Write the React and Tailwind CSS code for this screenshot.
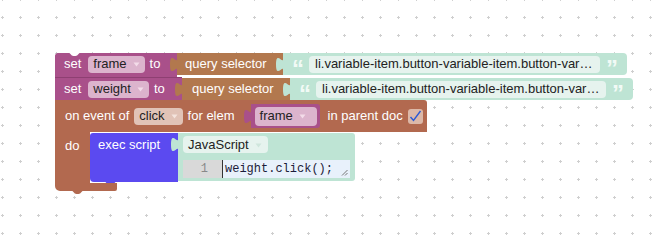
import React from 'react';

const Grid = () => (
  <svg className="absolute inset-0" width="665" height="245">
    <defs>
      <pattern id="dots" x="0" y="1" width="18" height="18" patternUnits="userSpaceOnUse">
        <rect x="1" y="16" width="3" height="1" fill="#cfcfcf" />
        <rect x="2" y="15" width="1" height="3" fill="#cfcfcf" />
      </pattern>
    </defs>
    <rect width="665" height="245" fill="url(#dots)" />
  </svg>
);

// puzzle tab on the left of a value block
const OutTab = ({ color, top = 4 }) => (
  <svg className="absolute" style={{ left: -7, top }} width="8" height="15" viewBox="0 0 8 15">
    <path d="M8,0 c0,10 -8,-8 -8,7.5 s8,-2.5 8,7.5 Z" fill={color} />
  </svg>
);

// notch tab under a statement block
const NextTab = ({ color, left, bottom = -4 }) => (
  <svg className="absolute" style={{ left, bottom }} width="15" height="5" viewBox="0 0 15 5">
    <path d="M0,0 C3,0 4,4 6.5,4 L8.5,4 C11,4 12,0 15,0 Z" fill={color} />
  </svg>
);

const Arrow = ({ color }) => (
  <svg width="7" height="5" viewBox="0 0 7 5" className="ml-[6px] mt-[1px] shrink-0">
    <path d="M0.5,0.5 L6.5,0.5 L3.5,4.5 Z" fill={color} />
  </svg>
);

const Dropdown = ({ label, bg, arrow, className = '' }) => (
  <div className={`flex shrink-0 items-center h-[17px] rounded-[4px] pl-[5px] pr-[5px] text-[#222] ${bg} ${className}`}>
    <span>{label}</span>
    <Arrow color={arrow} />
  </div>
);

const StringBlock = ({ text, className = '' }) => (
  <div className={`relative flex shrink-0 items-center h-[22px] bg-[#bee4d4] rounded-r-[4px] pl-[9px] pr-[9px] ${className}`}>
    <OutTab color="#bee4d4" />
    <span className="text-[24px] font-bold text-[#f2faf6] leading-none mt-[9px] mr-[5px]">“</span>
    <div className="h-[17px] flex-1 flex items-center bg-[#e6f3ee] rounded-[4px] px-[6px] text-[#222] overflow-hidden">{text}</div>
    <span className="text-[24px] font-bold text-[#f2faf6] leading-none mt-[9px] ml-[6px]">”</span>
  </div>
);

const SetRow = ({ name, setW, qW, qPl, strText, strW, h }) => (
  <div className={`flex ${h}`}>
    <div className={`relative flex shrink-0 items-center h-[22px] pl-[9px] bg-[#a9508a] text-white ${setW}`}>
      <span>set</span>
      <Dropdown label={name} bg="bg-[#dcb4cd]" arrow="#f3dce9" className="ml-[7px]" />
      <span className="ml-[5px]">to</span>
    </div>
    <div className={`relative flex shrink-0 items-center h-[22px] bg-[#b2784e] text-white ${qPl} ${qW}`}>
      <OutTab color="#b2784e" />
      query selector
    </div>
    <StringBlock text={strText} className={strW} />
  </div>
);

export default function App() {
  const longSel = 'li.variable-item.button-variable-item.button-var…';
  return (
    <div className="relative w-[665px] h-[245px] bg-white overflow-hidden whitespace-nowrap text-[13px] font-['Liberation_Sans',Arial,sans-serif]">
      <Grid />

      {/* block stack on the workspace */}
      <div className="absolute left-[55px] top-[53px] flex flex-col">
        <div className="relative bg-[#a9508a] w-[122px] h-[24px] rounded-tl-[4px]">
          <div className="absolute inset-0 w-max">
            <SetRow name="frame" h="h-[24px]" setW="w-[122px] rounded-tl-[4px]" qW="w-[106px]" qPl="pl-[8px]" strText={longSel} strW="w-[344px]" />
          </div>
          <svg className="absolute left-[12px] -top-[1px]" width="15" height="5" viewBox="0 0 15 5">
            <path d="M0,0 C3,0 4,4 6.5,4 L8.5,4 C11,4 12,0 15,0 Z" fill="#fff" />
          </svg>
        </div>
        <div className="relative bg-[#a9508a] w-[127px] h-[23px] border-t border-[#8e3f72]">
          <div className="absolute left-0 top-0 w-max">
            <SetRow name="weight" h="h-[22px]" setW="w-[127px]" qW="w-[108px]" qPl="pl-[10px]" strText={longSel} strW="w-[343px]" />
          </div>
          <NextTab color="#a9508a" left={12} bottom={-4} />
        </div>

        {/* on event block */}
        <div className="relative flex flex-col w-[372px]">
          <div className="flex items-center h-[32px] bg-[#b2694f] rounded-tr-[3px] text-white pl-[10px]">
            <span>on event of</span>
            <Dropdown label="click" bg="bg-[#e1c3b7]" arrow="#f4e4dd" className="ml-[5px]" />
            <span className="ml-[5px]">for elem</span>
            <div className="relative flex shrink-0 items-center h-[24px] w-[69px] ml-[16px] bg-[#a9508a] rounded-r-[3px] pl-[4px]">
              <OutTab color="#a9508a" top={5} />
              <Dropdown label="frame" bg="bg-[#dcb4cd]" arrow="#f3dce9" className="h-[19px] w-[62px]" />
            </div>
            <span className="ml-[8px]">in parent doc</span>
            <div className="ml-[5px] shrink-0 w-[15px] h-[15px] rounded-[3px] bg-[#dcb8a8] flex items-center justify-center">
              <svg width="13" height="12" viewBox="0 0 13 12">
                <path d="M1.5,7 L4.5,10.5 L11.5,1" stroke="#2a5ad6" strokeWidth="1.4" fill="none" />
              </svg>
            </div>
          </div>

          <div className="flex">
            <div className="w-[35px] shrink-0 bg-[#b2694f] text-white pl-[10px] pt-[4px] h-[51px]">do</div>
            <div className="relative flex h-[49px] mt-[1px]">
              <div className="relative w-[88px] shrink-0 bg-[#5b4af0] rounded-tl-[3px] rounded-bl-[4px] text-white pl-[8px] pt-[2px]">
                exec script
                <NextTab color="#5b4af0" left={13} bottom={-4} />
              </div>
              <div className="relative w-[177px] shrink-0 h-[48px] bg-[#bee4d4] rounded-r-[3px] pl-[5px] pt-[3px]">
                <OutTab color="#bee4d4" top={4} />
                <Dropdown label="JavaScript" bg="bg-[#e6f3ee]" arrow="#cfe6dc" className="w-[85px]" />
                <div className="flex mt-[7px] h-[18px] mr-[5px] text-[12px] font-['Liberation_Mono',monospace] text-[#1c1c3a]">
                  <div className="w-[39px] shrink-0 bg-[#d9d9d9] text-[#888] flex items-center justify-end pr-[14px]">1</div>
                  <div className="relative flex-1 bg-[#e8f1fb] flex items-center pl-[2px] border-l border-[#333]">
                    weight.click();
                    <svg className="absolute right-[2px] bottom-[2px]" width="7" height="7" viewBox="0 0 7 7">
                      <path d="M1,6.5 L6.5,1 M4,6.5 L6.5,4" stroke="#777" strokeWidth="1" />
                    </svg>
                  </div>
                </div>
              </div>
            </div>
          </div>

          <div className="relative w-[62px] h-[8px] bg-[#b2694f] rounded-bl-[5px] rounded-br-[2px]">
            <NextTab color="#b2694f" left={15} bottom={-4} />
          </div>
        </div>
      </div>
    </div>
  );
}
